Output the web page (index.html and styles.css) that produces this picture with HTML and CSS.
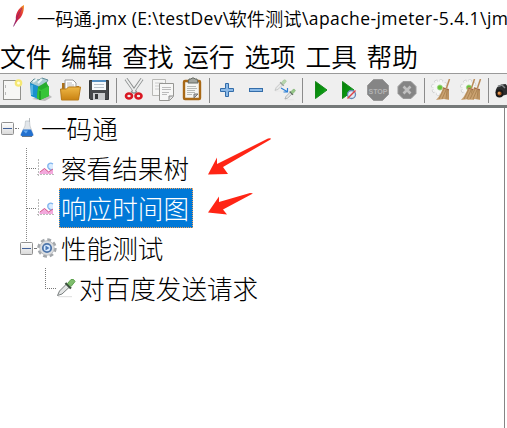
FILE: index.html
```html
<!DOCTYPE html>
<html lang="zh-CN">
<head>
<meta charset="utf-8">
<title>一码通.jmx</title>
<link rel="stylesheet" href="styles.css">
</head>
<body>
<svg width="0" height="0" class="defs">
  <defs>
    <linearGradient id="feather" x1="1" y1="0" x2="0" y2="1"><stop offset="0" stop-color="#f49b20"/><stop offset=".35" stop-color="#df3339"/><stop offset=".75" stop-color="#bd1b4c"/><stop offset="1" stop-color="#753080"/></linearGradient>
    <linearGradient id="green" x1="0" y1="0" x2="1" y2="1"><stop offset="0" stop-color="#087d08"/><stop offset=".6" stop-color="#0a9712"/><stop offset="1" stop-color="#54d94b"/></linearGradient>
    <linearGradient id="gold" x1="0" y1="0" x2="0" y2="1"><stop offset="0" stop-color="#efb846"/><stop offset="1" stop-color="#c98212"/></linearGradient>
    <linearGradient id="box" x1="0" y1="0" x2="0" y2="1"><stop offset="0" stop-color="#fff"/><stop offset="1" stop-color="#d9d9d9"/></linearGradient>
    <symbol id="chart" viewBox="0 0 18 18">
      <path d="M1.500 0v17.500M0 15.500h17" fill="none" stroke="#bbb" stroke-dasharray="2 1"/>
      <path d="M16 5c-3-2-6 0-5 3.500 1 2 3 2.500 5 2.500z" fill="#d9ecff"/><path d="M16 5c-3-2-6 0-5 3.500 1 2 3 2.500 5 2.500" fill="none" stroke="#7fb4ee" stroke-width="1.300"/>
      <path d="M2.500 15v-2l5-4 4 3.500 4.500-2V15z" fill="#f3a9dd"/>
      <path d="M3 13l4.500-3.500 4 3.500 4.500-3" fill="none" stroke="#d0608a"/>
    </symbol>
    <symbol id="dropper" viewBox="0 0 20 20">
      <path d="M2 18.700h14" stroke="#ddd"/>
      <path d="M1.500 17.500l2-4.500 7-7 3 3-7.500 7z" fill="#e3e5e5" stroke="#7a7f7f"/>
      <path d="M9.500 5l5.500 5.500" stroke="#3d5040" stroke-width="2.200"/>
      <path d="M11.500 5.500l3.500-4q3-1 4 2l-4 5z" fill="#7fbe6d" stroke="#5ea24e"/>
    </symbol>
    <symbol id="minus" viewBox="0 0 13 13"><rect x=".5" y=".5" width="12" height="12" rx="1" fill="url(#box)" stroke="#919191"/><path d="M2 6.500h9" stroke="#42629a"/></symbol>
    <symbol id="cog" viewBox="0 0 20 20">
      <circle cx="10" cy="10" r="8" fill="none" stroke="#a3a7ab" stroke-width="3.400" stroke-dasharray="3.600 2.683"/>
      <circle cx="10" cy="10" r="7.300" fill="#dcdee0" stroke="#b0b3b7" stroke-width=".7"/>
      <circle cx="10" cy="10" r="4.200" fill="#d8eaff" stroke="#4e75aa" stroke-width="1.800"/><path d="M8.500 7.500l4 2.500-4 2.500z" fill="#4979b8"/>
    </symbol>
    <symbol id="broom" viewBox="0 0 15 22">
      <path d="M13.500 0L10.500 9" stroke="#b98a58" stroke-width="1.500"/>
      <path d="M7 8l6 2v11l-5-1-8 1q5-5 7-13z" fill="#caa271"/>
      <path d="M8 10L3 20M10 11L6 20M11 11l-1 9M12 10v10" stroke="#97703f" stroke-width=".6"/><path d="M7 9l6 2" stroke="#a2674a"/>
    </symbol>
    <symbol id="gear" viewBox="0 0 20 20">
      <circle cx="10" cy="10" r="7.800" fill="none" stroke="#c4c6c6" stroke-width="3.800" stroke-dasharray="3.600 2.526"/>
      <circle cx="10" cy="10" r="7.800" fill="none" stroke="#f7f7f7" stroke-width="2.400" stroke-dasharray="3 3.126" stroke-dashoffset="-.3"/>
      <circle cx="10" cy="10" r="7" fill="#f6f7f6"/><circle cx="10.500" cy="10" r="3" fill="#67c437" stroke="#a3d38e"/>
    </symbol>
  </defs>
</svg>
<header class="title">
  <svg class="feather" viewBox="0 0 14 22"><path d="M1.500 21.500L4 15C3 10 6 3 12 0c0 7-2 12-6 15z" fill="url(#feather)"/><path d="M1.500 21.500Q5 11 10 3" fill="none" stroke="#8c236b" stroke-width=".7"/></svg>
  <span class="cn t1">一码通</span><span class="t2">.jmx (E:\testDev\</span><span class="cn t3">软件测试</span><span class="t4">\apache-jmeter-5.4.1\jm</span>
</header>
<nav class="menu"><span>文件</span><span>编辑</span><span>查找</span><span>运行</span><span>选项</span><span>工具</span><span>帮助</span></nav>
<div class="toolbar">
  <svg viewBox="-2 74 29 31"><rect x="3.500" y="80.500" width="17" height="19" fill="#f7f7f5" stroke="#92928e"/><path d="M5.500 85v3m0 4v3" stroke="#bbb"/><circle cx="18.500" cy="83" r="3.800" fill="#f6e873"/><circle cx="18.500" cy="83" r="1.500" fill="#fffde0"/></svg>
  <svg viewBox="27 74 29 31"><path d="M32 99l13 2 7-4-4-3z" fill="#bbb"/><path d="M30 83l4-4 5 1 3-2 6 2-3 5-8 2z" fill="#a9cbd2" stroke="#628d98"/><path d="M33 82l4-3m1 4l4-4" stroke="#e9f4f5" stroke-width="2"/><path d="M30 83l8 3v13l-7-3z" fill="#1a91ce"/><path d="M32 85v10" stroke="#8dd3f2"/><path d="M38 87l8-5 3 5v9l-9 4-3-2z" fill="#27ad2d"/><path d="M38 88l3 2 8-4v10l-9 4-3-2z" fill="#36c437"/><path d="M40 91v9" stroke="#127d1a"/></svg>
  <svg viewBox="56 74 29 31"><path d="M62 87v-4h6l2 3h9v13H61z" fill="#ad711a"/><path d="M65 80h8l3 3v8H65z" fill="#fff" stroke="#999"/><path d="M67 83h5m-5 2h7m-7 2h7" stroke="#bbb"/><path d="M60.500 89h6l2-2h12l-2 13H61.500z" fill="url(#gold)" stroke="#b97c1b"/></svg>
  <svg viewBox="85 74 29 31"><path d="M89.500 80.500h19v19h-18l-1-1z" fill="#45484a" stroke="#333638"/><path d="M92 80h14v10H92z" fill="#f5f9fc"/><path d="M92 81h14" stroke="#528ec1" stroke-width="2"/><path d="M94 84.500h10m-10 3h10" stroke="#b6c1ca"/><path d="M93 93h12v7H93z" fill="#c9cccd"/><path d="M95 94h3v5h-3z" fill="#353839"/></svg>
  <i></i>
  <svg viewBox="120 74 29 31"><path d="M126 79l10 14m6-14l-10 14" stroke="#8b8e8e" stroke-width="3.500"/><path d="M126 79l9 13m7-13l-9 13" stroke="#edeeee" stroke-width="1.800"/><ellipse cx="129" cy="96" rx="3" ry="2.500" fill="#eee" stroke="#d91722" stroke-width="2.600"/><ellipse cx="138.500" cy="96" rx="3" ry="2.500" fill="#eee" stroke="#d91722" stroke-width="2.600"/></svg>
  <svg viewBox="149 74 29 31"><path d="M152.500 79.500h13v16h-13z" fill="#f5f5f4" stroke="#b8b8b5"/><path d="M155 83h8m-8 3h8m-8 3h5" stroke="#ccc"/><path d="M159.500 83.500h14v13l-4 4h-10z" fill="#f7f7f6" stroke="#969693"/><path d="M162 87.500h9m-9 2h9m-9 3h7m-7 2h5" stroke="#bbb"/><path d="M169 100v-4h4" fill="#ddd" stroke="#888"/></svg>
  <svg viewBox="178 74 29 31"><rect x="184" y="81" width="16" height="18" rx="1" fill="#f5f5f2" stroke="#a86816" stroke-width="2.400"/><path d="M188 83l1-4h2l1-1h2l1 1h2l1 4z" fill="#a2a59f" stroke="#656961"/><path d="M187 86.500h9m-9 2h10m-10 2h8m-8 2h8m-8 2h5" stroke="#b7b9b5"/><path d="M194 98v-4h4z" fill="#bbb" stroke="#777"/></svg>
  <i></i>
  <svg viewBox="213 74 29 31"><path d="M225.500 83.500h3v5h5v3h-5v5h-3v-5h-5v-3h5z" fill="#8cbae8" stroke="#346da9"/></svg>
  <svg viewBox="242 74 29 31"><rect x="249.500" y="88.500" width="13" height="3" fill="#8cbae8" stroke="#346da9"/></svg>
  <svg viewBox="271 74 29 31"><g opacity=".5"><use href="#dropper" x="274" y="79" width="13" height="13"/></g><g opacity=".8"><use href="#dropper" x="284" y="88" width="12" height="13"/></g><path d="M281 88l6 3.500m-3.500 .5h4V88" fill="none" stroke="#2c80d7" stroke-width="1.200"/></svg>
  <i></i>
  <svg viewBox="306 74 29 31"><path d="M315.500 81.500l11.500 8.500-11.500 8.500z" fill="url(#green)" stroke="#16891b"/></svg>
  <svg viewBox="335 74 29 31"><path d="M342.500 81.500L354 90l-11.500 8.500z" fill="url(#green)" stroke="#16891b"/><circle cx="351.500" cy="94.500" r="4" fill="#e2eaf5" stroke="#6687b4" stroke-width="1.300"/><path d="M347.500 98.500l8-8" stroke="#de4245" stroke-width="1.500"/></svg>
  <svg viewBox="364 74 29 31"><path d="M373.500 79.500h9l6 6v9l-6 6h-9l-6-6v-9z" fill="#858585" stroke="#999"/><text class="stop" x="378" y="93.500" text-anchor="middle" textLength="19" lengthAdjust="spacingAndGlyphs">STOP</text></svg>
  <svg viewBox="393 74 29 31"><path d="M403 81.500h8l5 5v7l-5 5h-8l-5-5v-7z" fill="#858585" stroke="#999"/><path d="M403.500 86.500l7 7m0-7l-7 7" stroke="#c0c0c0" stroke-width="2.600"/></svg>
  <i></i>
  <svg viewBox="428 74 29 31"><use href="#gear" x="431" y="79" width="17" height="17"/><use href="#broom" x="436" y="79" width="15" height="22"/></svg>
  <svg viewBox="457 74 29 31"><use href="#gear" x="460" y="79" width="17" height="17"/><use href="#broom" x="461" y="79" width="15" height="22"/><use href="#broom" x="467" y="79" width="15" height="22"/></svg>
  <i></i>
  <svg viewBox="492 74 29 31"><path d="M495.500 93q0-7 6-8.500l4-.5 3 3v7l-7 2z" fill="#2b2c2d"/><path d="M498 86.500l4-1.500 3 3" fill="none" stroke="#85898b" stroke-width="1.500"/><circle cx="499.500" cy="93.500" r="3" fill="#a85820" stroke="#171717" stroke-width="1.800"/><circle cx="499" cy="93" r="1.200" fill="#e09a58"/></svg>
</div>
<main class="pane">
  <div class="tree">
    <div class="row root"><svg class="toggle"><use href="#minus"/></svg><b class="dots"></b><svg class="flask" viewBox="0 0 14 20"><path d="M5.500 3h4l.5 5 3 8q1 2-1 2H2q-2 0-1-2l4-8z" fill="#e2e6ea" stroke="#c0c6cb" stroke-width=".8"/><path d="M9.500 0v4" stroke="#b5babd"/><path d="M3 11.500h8l2 4.500q1 2-2 2H3q-3 0-2-2z" fill="#2371cf"/><path d="M3 12.500h5l-2 3z" fill="#66aaf0"/><path d="M2 18.500h10" stroke="#697684"/></svg><span>一码通</span></div>
    <div class="branch">
      <div class="row leaf"><b class="dots"></b><svg class="chart"><use href="#chart"/></svg><span>察看结果树</span><svg class="arrow a1" viewBox="207 137 66 39"><path d="M208 174.500l9-17v6.500L268 138.500q4-1 2.500 1L223 167l5 7z" fill="#ff2515"/></svg></div>
      <div class="row leaf"><b class="dots"></b><svg class="chart"><use href="#chart"/></svg><span class="selected">响应时间图</span><svg class="arrow a2" viewBox="207 191 47 24"><path d="M208 212.500l11-16v5.500l31-9q4 0 2 1L223 209.500l4 5z" fill="#ff2515"/></svg></div>
      <div class="row group"><svg class="toggle"><use href="#minus"/></svg><b class="dots"></b><svg class="cog"><use href="#cog"/></svg><span>性能测试</span></div>
    </div>
    <div class="row sample"><b class="elbow"></b><svg class="dropper"><use href="#dropper"/></svg><span>对百度发送请求</span></div>
  </div>
</main>
</body>
</html>
```
FILE: styles.css
```css
* { box-sizing: border-box; }
body { margin: 0; width: 507px; height: 428px; overflow: hidden; background: #fff; color: #000; }
.defs { position: absolute; }
.title { display: flex; height: 35px; align-items: center; padding-left: 12px; font: 17.5px/34px "Open Sans", "Noto Sans CJK SC", sans-serif; white-space: pre; overflow: hidden; }
.feather { width: 14px; height: 22px; margin-right: 11px; flex: none; position: relative; top: -2px; }
.title span { flex: none; }
.title .cn { font: 350 18.3px/34px "Noto Sans CJK SC", sans-serif; }
.t1 { width: 54.5px; }
.t2 { width: 137px; letter-spacing: .28px; }
.t3 { width: 73.5px; }
.t4 { letter-spacing: .42px; }
.menu { display: flex; height: 38px; gap: 9.8px; font: 350 25.7px/42px "Noto Sans CJK SC", sans-serif; white-space: nowrap; }
.menu span { width: 51.3px; flex: none; }
.toolbar { display: flex; height: 35px; background: #efefef; border-top: 1px solid #9a9a9a; border-bottom: 3px solid #757979; overflow: hidden; }
.toolbar svg { width: 29px; height: 31px; flex: none; }
.toolbar svg:first-child { margin-left: -2px; }
.toolbar i { width: 6px; height: 25px; margin-top: 4px; flex: none; background: linear-gradient(#8b8b8b, #8b8b8b) 2px 0 / 1px 100% no-repeat; }
.stop { font: bold 8px "Liberation Sans", sans-serif; fill: #b3b3b3; }
.pane { height: 320px; width: 505px; border-right: 1px solid #858585; }
.tree { font: 300 25.6px/40px "Noto Sans CJK SC", sans-serif; white-space: nowrap; }
.row { display: flex; height: 40px; align-items: center; }
.row svg { flex: none; }
.toggle { width: 13px; height: 13px; }
.root { padding-left: 1px; }
.dots { width: 4px; margin: 0 1px; border-top: 1px dotted #777; }
.flask { width: 14px; height: 20px; margin: 0 7px 0 0; }
.branch { background: repeating-linear-gradient(#888 0 1px, transparent 1px 2px) 26px 0 / 1px 94px no-repeat; }
.leaf { padding-left: 26px; }
.leaf .dots { width: 10px; margin: 0 1px 0 0; }
.chart { width: 18px; height: 18px; margin-right: 4px; }
.leaf span { height: 40px; width: 134px; padding-left: 2px; }
.leaf .selected { background: #0078d7; color: #fff; border: 1px dotted #f2a35c; line-height: 38px; padding-left: 1px; }
.arrow { position: relative; }
.a1 { width: 66px; height: 39px; margin-left: 14px; top: -12px; }
.a2 { width: 47px; height: 24px; margin-left: 14px; top: -5px; }
.group { padding-left: 20px; }
.group .dots { width: 2px; }
.cog { width: 20px; height: 20px; margin: 0 4px 0 0; }
.sample { padding-left: 45px; }
.elbow { width: 11px; height: 21px; border-left: 1px dotted #777; border-bottom: 1px dotted #777; align-self: flex-start; }
.dropper { width: 20px; height: 20px; margin-right: 3px; }
```
